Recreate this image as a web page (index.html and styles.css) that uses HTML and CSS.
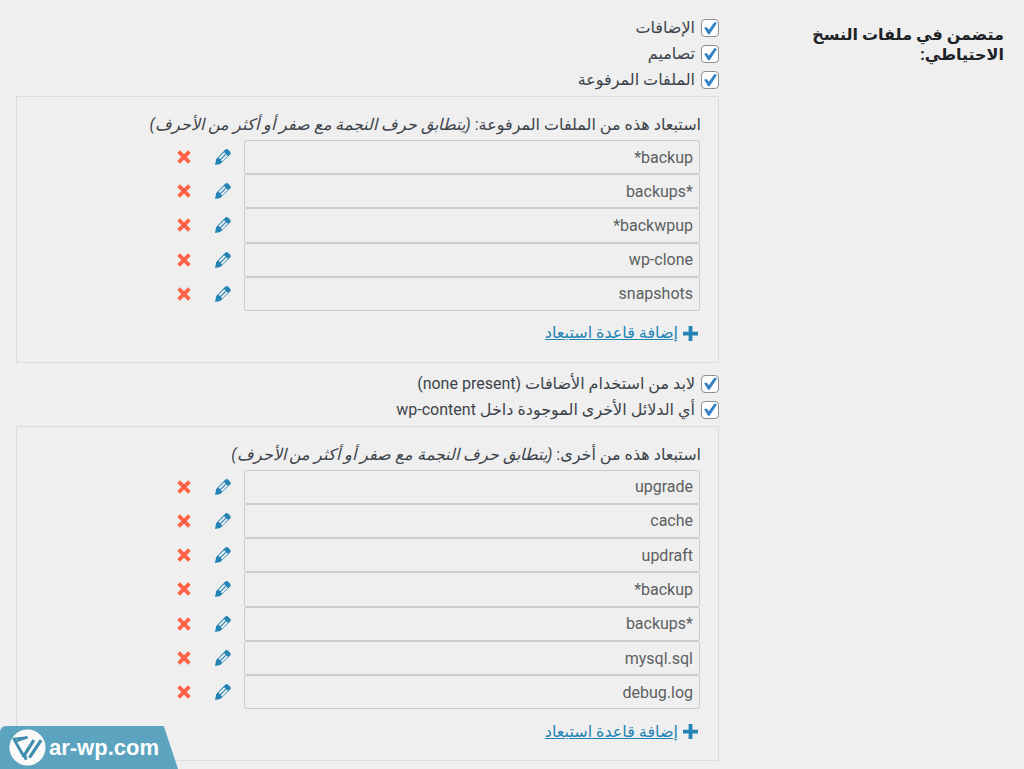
FILE: index.html
```html
<!DOCTYPE html>
<html lang="ar" dir="rtl">
<head>
<meta charset="utf-8">
<meta name="viewport" content="width=device-width, initial-scale=1">
<title>إعدادات النسخ الاحتياطي</title>
<link rel="stylesheet" href="styles.css">
</head>
<body>
<svg class="sprite" aria-hidden="true">
  <symbol id="pencil" viewBox="0 0 18 18">
    <path fill="currentColor" fill-rule="evenodd" d="M11.4 1.6Q12.6.5 14 1.6L16.3 3.9Q17.3 5 16.4 6.2L6.3 16 1 17 2.2 11ZM10.2 4.2 4.6 9.8 8.2 13.4 13.8 7.8Z"/>
    <path stroke="currentColor" stroke-width="1.1" d="M6 12 12.2 5.8"/>
  </symbol>
  <symbol id="cross" viewBox="0 0 14 14">
    <path stroke="currentColor" stroke-width="3.8" d="M1.6 1.6 12.4 12.4M12.4 1.6 1.6 12.4"/>
  </symbol>
</svg>
<main class="settings">
  <h2 class="heading">متضمن في ملفات النسخ الاحتياطي:</h2>
  <form class="content">
    <div class="checks">
      <label class="check"><input type="checkbox" checked><span>الإضافات</span></label>
      <label class="check"><input type="checkbox" checked><span>تصاميم</span></label>
      <label class="check"><input type="checkbox" checked><span>الملفات المرفوعة</span></label>
    </div>
    <section class="panel">
      <p class="caption">استبعاد هذه من الملفات المرفوعة: <em>(يتطابق حرف النجمة مع صفر أو أكثر من الأحرف)</em></p>
      <div class="rules rules-uploads">
        <div class="rule"><input type="text" aria-label="قاعدة" readonly value="backup*"><button type="button" class="edit" aria-label="تعديل"><svg><use href="#pencil"/></svg></button><button type="button" class="remove" aria-label="حذف"><svg><use href="#cross"/></svg></button></div>
        <div class="rule"><input type="text" aria-label="قاعدة" readonly value="*backups"><button type="button" class="edit" aria-label="تعديل"><svg><use href="#pencil"/></svg></button><button type="button" class="remove" aria-label="حذف"><svg><use href="#cross"/></svg></button></div>
        <div class="rule"><input type="text" aria-label="قاعدة" readonly value="backwpup*"><button type="button" class="edit" aria-label="تعديل"><svg><use href="#pencil"/></svg></button><button type="button" class="remove" aria-label="حذف"><svg><use href="#cross"/></svg></button></div>
        <div class="rule"><input type="text" aria-label="قاعدة" readonly value="wp-clone"><button type="button" class="edit" aria-label="تعديل"><svg><use href="#pencil"/></svg></button><button type="button" class="remove" aria-label="حذف"><svg><use href="#cross"/></svg></button></div>
        <div class="rule"><input type="text" aria-label="قاعدة" readonly value="snapshots"><button type="button" class="edit" aria-label="تعديل"><svg><use href="#pencil"/></svg></button><button type="button" class="remove" aria-label="حذف"><svg><use href="#cross"/></svg></button></div>
      </div>
      <a class="add" href="#"><svg viewBox="0 0 16 16" aria-hidden="true"><path fill="currentColor" d="M6 0h4v6h6v4h-6v6H6v-6H0V6h6z"/></svg><span>إضافة قاعدة استبعاد</span></a>
    </section>
    <div class="checks">
      <label class="check"><input type="checkbox" checked><span>لابد من استخدام الأضافات (none present)</span></label>
      <label class="check"><input type="checkbox" checked><span>أي الدلائل الأخرى الموجودة داخل wp-content</span></label>
    </div>
    <section class="panel">
      <p class="caption">استبعاد هذه من أخرى: <em>(يتطابق حرف النجمة مع صفر أو أكثر من الأحرف)</em></p>
      <div class="rules rules-others">
        <div class="rule"><input type="text" aria-label="قاعدة" readonly value="upgrade"><button type="button" class="edit" aria-label="تعديل"><svg><use href="#pencil"/></svg></button><button type="button" class="remove" aria-label="حذف"><svg><use href="#cross"/></svg></button></div>
        <div class="rule"><input type="text" aria-label="قاعدة" readonly value="cache"><button type="button" class="edit" aria-label="تعديل"><svg><use href="#pencil"/></svg></button><button type="button" class="remove" aria-label="حذف"><svg><use href="#cross"/></svg></button></div>
        <div class="rule"><input type="text" aria-label="قاعدة" readonly value="updraft"><button type="button" class="edit" aria-label="تعديل"><svg><use href="#pencil"/></svg></button><button type="button" class="remove" aria-label="حذف"><svg><use href="#cross"/></svg></button></div>
        <div class="rule"><input type="text" aria-label="قاعدة" readonly value="backup*"><button type="button" class="edit" aria-label="تعديل"><svg><use href="#pencil"/></svg></button><button type="button" class="remove" aria-label="حذف"><svg><use href="#cross"/></svg></button></div>
        <div class="rule"><input type="text" aria-label="قاعدة" readonly value="*backups"><button type="button" class="edit" aria-label="تعديل"><svg><use href="#pencil"/></svg></button><button type="button" class="remove" aria-label="حذف"><svg><use href="#cross"/></svg></button></div>
        <div class="rule"><input type="text" aria-label="قاعدة" readonly value="mysql.sql"><button type="button" class="edit" aria-label="تعديل"><svg><use href="#pencil"/></svg></button><button type="button" class="remove" aria-label="حذف"><svg><use href="#cross"/></svg></button></div>
        <div class="rule"><input type="text" aria-label="قاعدة" readonly value="debug.log"><button type="button" class="edit" aria-label="تعديل"><svg><use href="#pencil"/></svg></button><button type="button" class="remove" aria-label="حذف"><svg><use href="#cross"/></svg></button></div>
      </div>
      <a class="add" href="#"><svg viewBox="0 0 16 16" aria-hidden="true"><path fill="currentColor" d="M6 0h4v6h6v4h-6v6H6v-6H0V6h6z"/></svg><span>إضافة قاعدة استبعاد</span></a>
    </section>
  </form>
</main>
<div class="badge" dir="ltr">
  <svg class="logo" viewBox="0 0 38 38" aria-hidden="true">
    <circle cx="19" cy="19" r="18.5" fill="#fafafa"/>
    <g fill="none" stroke="#3e8fae" stroke-linejoin="round">
      <path stroke-width="2" d="M19 8.5 4.5 10 14.5 28 21 17.5"/>
      <path stroke-width="2.5" d="M19 8.5 7 12.5M5.5 11 15 27"/>
      <path stroke-width="3.2" d="M25.5 11.5 14.5 29M33 11.5 21 29.5"/>
    </g>
    <path fill="#3e8fae" d="m15 28 3-1 1 4-3 1z"/>
  </svg>
  <span>ar-wp.com</span>
</div>
</body>
</html>
```
FILE: styles.css
```css
* { box-sizing: border-box; }

body {
  margin: 0;
  background: #efefef;
  color: #3c434a;
  font: 16px/24px Tahoma, Roboto, "DejaVu Sans", sans-serif;
}

.sprite { display: none; }

.settings {
  display: flex;
  gap: 85px;
  padding: 16px 20px 0 16px;
}

.heading {
  flex: 0 0 200px;
  margin: 9px 0 0;
  color: #1d2327;
  font-size: 16px;
  line-height: 20px;
}

.content { flex: 1; min-width: 0; }

.check {
  display: flex;
  align-items: center;
  gap: 6px;
  height: 24px;
  margin-bottom: 2px;
}

.check input {
  appearance: none;
  flex: none;
  width: 18px;
  height: 18px;
  margin: 0;
  border: 1px solid #8c8f94;
  border-radius: 4px;
  background: #fff;
  display: grid;
  place-items: center;
}

.check input::before {
  content: "";
  width: 14px;
  height: 14px;
  background: #3582c4;
  clip-path: polygon(8% 48%, 26% 42%, 42% 62%, 82% 8%, 100% 14%, 47% 94%, 36% 94%);
}

.panel {
  margin: 4px 0 9px;
  padding: 16px 17px 14px 18px;
  border: 1px solid #dcdcde;
}

.caption { margin: 0 0 3px; }
.caption em { font-family: Tahoma, Roboto, "DejaVu Sans Condensed", sans-serif; }

.rules {
  display: grid;
  grid-auto-rows: 1fr;
}

.rules-uploads { min-height: 171px; }
.rules-others { min-height: 240px; }

.rule { display: flex; align-items: center; padding-right: 1px; }

.rule input {
  width: 456px;
  height: 100%;
  min-height: 34px;
  padding: 0 6px;
  border: 1px solid #ccc;
  border-radius: 2px;
  background: transparent;
  color: #5c5f62;
  font: inherit;
}

.rule button {
  display: grid;
  place-items: center;
  padding: 0;
  border: 0;
  background: none;
}

.edit { width: 18px; margin-right: 12px; color: #2484b4; }
.edit svg { width: 18px; height: 18px; fill: none; }
.remove { width: 14px; margin-right: 23px; color: #ff6347; }
.remove svg { width: 14px; height: 14px; }

.add {
  display: inline-flex;
  align-items: center;
  gap: 5px;
  margin-top: 10px;
  margin-right: 3px;
  color: #2484b4;
}

.add svg { width: 15px; height: 15px; }

.badge {
  position: fixed;
  left: 0;
  bottom: 0;
  display: flex;
  align-items: center;
  gap: 3px;
  height: 43px;
  padding: 0 19px 0 9px;
  border-top-left-radius: 6px;
  background: #5ba3be;
  clip-path: polygon(0 0, 92% 0, 100% 100%, 0 100%);
  color: #fff;
  font: bold 22px/24px "Liberation Sans", Arial, sans-serif;
}

.logo { width: 37px; height: 37px; }
```
